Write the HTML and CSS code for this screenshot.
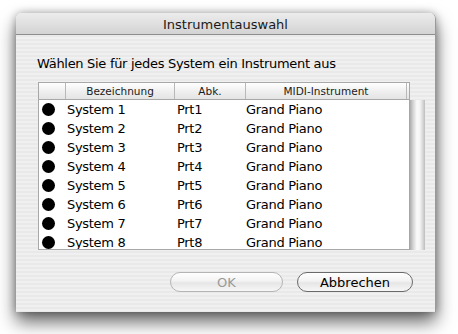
FILE: index.html
```html
<!DOCTYPE html>
<html lang="de">
<head>
    <meta charset="UTF-8">
    <title>Instrumentauswahl</title>
    <link rel="stylesheet" href="styles.css">
</head>
<body>

    <div class="window">
        <div class="titlebar">Instrumentauswahl</div>
        <div class="content">
            <p class="prompt">Wählen Sie für jedes System ein Instrument aus</p>

            <div class="list">
                <div class="list-head">
                    <div class="col col-dot"></div>
                    <div class="col col-name">Bezeichnung</div>
                    <div class="col col-abbr">Abk.</div>
                    <div class="col col-midi">MIDI-Instrument</div>
                    <div class="col col-end"></div>
                </div>
                <div class="list-body">
                    <div class="rows">
                        <div class="row"><span class="dot"></span><span class="cell-name">System 1</span><span class="cell-abbr">Prt1</span><span class="cell-midi">Grand Piano</span></div>
                        <div class="row"><span class="dot"></span><span class="cell-name">System 2</span><span class="cell-abbr">Prt2</span><span class="cell-midi">Grand Piano</span></div>
                        <div class="row"><span class="dot"></span><span class="cell-name">System 3</span><span class="cell-abbr">Prt3</span><span class="cell-midi">Grand Piano</span></div>
                        <div class="row"><span class="dot"></span><span class="cell-name">System 4</span><span class="cell-abbr">Prt4</span><span class="cell-midi">Grand Piano</span></div>
                        <div class="row"><span class="dot"></span><span class="cell-name">System 5</span><span class="cell-abbr">Prt5</span><span class="cell-midi">Grand Piano</span></div>
                        <div class="row"><span class="dot"></span><span class="cell-name">System 6</span><span class="cell-abbr">Prt6</span><span class="cell-midi">Grand Piano</span></div>
                        <div class="row"><span class="dot"></span><span class="cell-name">System 7</span><span class="cell-abbr">Prt7</span><span class="cell-midi">Grand Piano</span></div>
                        <div class="row"><span class="dot"></span><span class="cell-name">System 8</span><span class="cell-abbr">Prt8</span><span class="cell-midi">Grand Piano</span></div>
                    </div>
                    <div class="track"></div>
                </div>
            </div>

            <div class="buttons">
                <button class="btn btn-ok" disabled>OK</button>
                <button class="btn btn-cancel">Abbrechen</button>
            </div>
        </div>
    </div>

</body>
</html>
```

FILE: styles.css
```css
body {
    margin: 0;
    min-height: 334px;
    padding-top: 13px;
    box-sizing: border-box;
    background: #fff;
    font-family: "DejaVu Sans", "Liberation Sans", sans-serif;
    font-size: 13px;
    color: #000;
}
.window {
    margin-left: 16px;
    width: 420px;
    height: 299px;
    border-radius: 6px 6px 0 0;
    border-right: 1px solid #9a9a9a;
    box-sizing: border-box;
    background: repeating-linear-gradient(to bottom, #f0f0f0 0, #f0f0f0 2px, #e9e9e9 2px, #e9e9e9 4px);
    box-shadow: 0 10px 18px rgba(0, 0, 0, 0.6), 0 0 8px rgba(0, 0, 0, 0.3);
    overflow: hidden;
}
.titlebar {
    height: 21px;
    line-height: 23px;
    text-align: center;
    font-size: 13px;
    color: #1a1a1a;
    background: linear-gradient(to bottom, #ececec, #d3d3d3);
    border-bottom: 1px solid #8e8e8e;
}
.content {
    padding-left: 22px;
}
.prompt {
    margin: 21px 0 0 -1px;
    line-height: 16px;
    letter-spacing: -0.3px;
}
.list {
    margin-top: 10px;
    width: 388px;
}
.list-head {
    display: flex;
    width: 372px;
    height: 18px;
    box-sizing: border-box;
    border: 1px solid #a8a8a8;
    background: linear-gradient(to bottom, #ffffff, #f0f0f0 50%, #e4e4e4);
    font-size: 10.5px;
    line-height: 16px;
}
.col {
    text-align: center;
    border-right: 1px solid #b8b8b8;
    color: #1a1a1a;
}
.col-dot { width: 26px; }
.col-name { width: 108px; }
.col-abbr { width: 70px; }
.col-midi { width: 160px; }
.col-end { flex: 1; border-right: none; }
.list-body {
    display: flex;
    height: 150px;
}
.rows {
    width: 371px;
    height: 150px;
    box-sizing: border-box;
    background: #fff;
    border-left: 1px solid #a8a8a8;
    border-bottom: 1px solid #a8a8a8;
    overflow: hidden;
    letter-spacing: -0.3px;
}
.row {
    display: flex;
    align-items: center;
    height: 19px;
    line-height: 19px;
}
.dot {
    width: 13px;
    height: 13px;
    border-radius: 50%;
    background: #000;
    margin-left: 3px;
}
.cell-name {
    margin-left: 12px;
    width: 110px;
}
.cell-abbr {
    width: 69px;
}
.track {
    width: 16px;
    height: 150px;
    background: linear-gradient(to right, #a0a0a0, #d2d2d2 25%, #fbfbfb 50%, #f2f2f2 70%, #d0d0d0 90%, #bdbdbd);
}
.buttons {
    display: flex;
    gap: 14px;
    margin: 22px 0 0 132px;
}
.btn {
    height: 20px;
    border-radius: 10px;
    font-family: inherit;
    font-size: 13px;
    padding: 0;
    background: linear-gradient(to bottom, #ffffff, #f3f3f3 45%, #e6e6e6 55%, #f7f7f7);
    border: 1px solid #6a6a6a;
    color: #000;
}
.btn-ok {
    width: 113px;
    border-color: #b4b4b4;
    color: #9a9a9a;
}
.btn-cancel {
    width: 116px;
}
```
